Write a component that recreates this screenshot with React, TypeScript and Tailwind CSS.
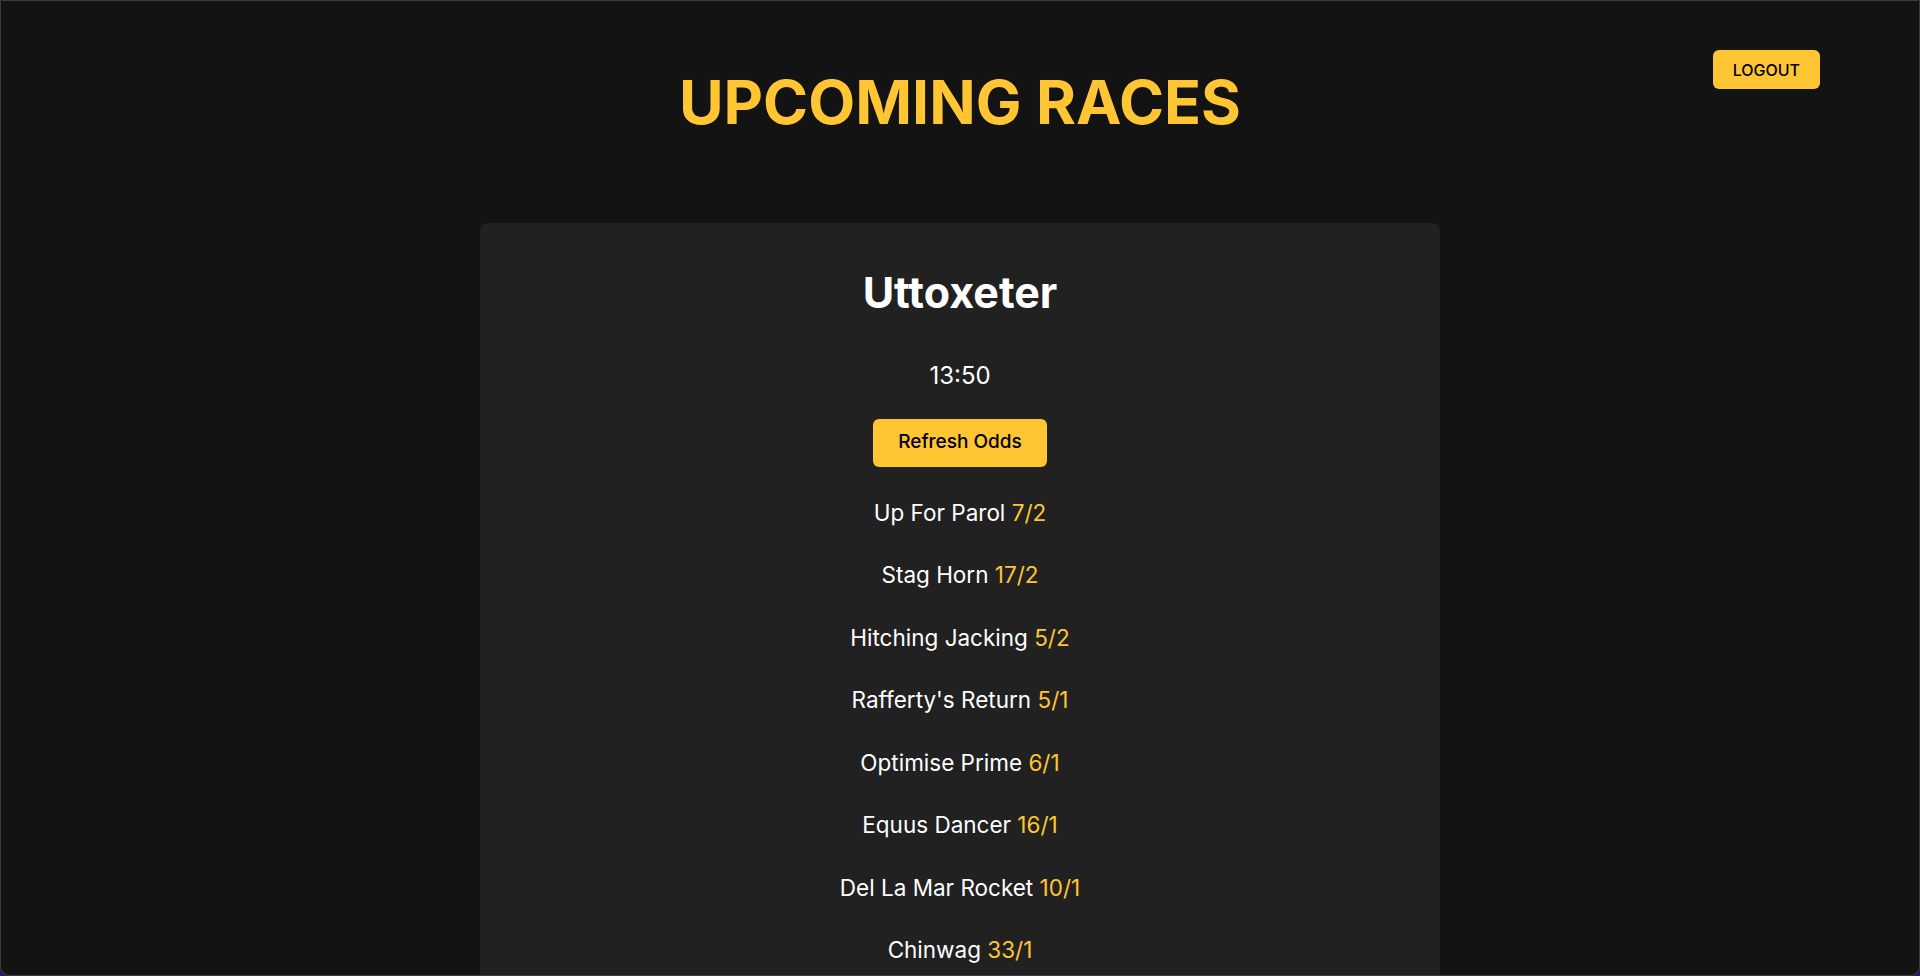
import React from "react";

const runners = [
  { name: "Up For Parol", odds: "7/2" },
  { name: "Stag Horn", odds: "17/2" },
  { name: "Hitching Jacking", odds: "5/2" },
  { name: "Rafferty's Return", odds: "5/1" },
  { name: "Optimise Prime", odds: "6/1" },
  { name: "Equus Dancer", odds: "16/1" },
  { name: "Del La Mar Rocket", odds: "10/1" },
  { name: "Chinwag", odds: "33/1" },
];

export default function App() {
  return (
    <div className="h-screen bg-[#2b1a63]">
      <div className="h-screen overflow-hidden rounded-b-[10px] border border-[#3a3a3a] bg-[#131313] font-['Inter',sans-serif] text-white">
        {/* Header */}
        <div className="grid grid-cols-[1fr_auto_1fr]">
          <div />
          <h1 className="mt-[71px] text-[61px] font-bold leading-none text-[#ffc533]">
            UPCOMING RACES
          </h1>
          <div className="flex justify-end">
            <button className="mr-[99px] mt-[49px] h-[39px] rounded-md bg-[#ffc533] px-[20px] text-[16px] font-medium text-black">
              LOGOUT
            </button>
          </div>
        </div>

        {/* Race card */}
        <div className="mx-auto mt-[90px] flex w-[960px] flex-col items-center rounded-lg bg-[#212121] pt-[44px] pb-12">
          <h2 className="text-[43px] font-bold leading-[1.2]">Uttoxeter</h2>
          <p className="mt-[41px] text-2xl">13:50</p>
          <button className="mt-[27px] h-[48px] rounded-md bg-[#ffc533] px-[25px] text-[19px] font-medium text-black">
            Refresh Odds
          </button>
          <div className="mt-[30px] flex flex-col items-center gap-[30.5px]">
            {runners.map((r) => (
              <p key={r.name} className="text-[22.5px] leading-8">
                {r.name} <span className="text-[#ffc533]">{r.odds}</span>
              </p>
            ))}
          </div>
        </div>
      </div>
    </div>
  );
}
